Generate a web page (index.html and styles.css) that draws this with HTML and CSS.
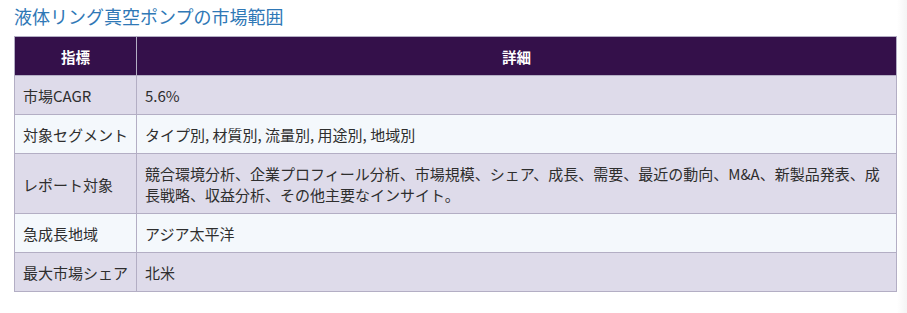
FILE: index.html
```html
<!DOCTYPE html>
<html lang="ja">
<head>
<meta charset="utf-8">
<title>液体リング真空ポンプの市場範囲</title>
<link rel="stylesheet" href="styles.css">
</head>
<body>
<div class="page">
  <h2 class="title">液体リング真空ポンプの市場範囲</h2>
  <table class="scope">
    <thead>
      <tr><th class="col-key">指標</th><th>詳細</th></tr>
    </thead>
    <tbody>
      <tr class="odd"><td>市場CAGR</td><td>5.6%</td></tr>
      <tr class="even"><td>対象セグメント</td><td>タイプ別, 材質別, 流量別, 用途別, 地域別</td></tr>
      <tr class="odd"><td>レポート対象</td><td>競合環境分析、企業プロフィール分析、市場規模、シェア、成長、需要、最近の動向、M&amp;A、新製品発表、成長戦略、収益分析、その他主要なインサイト。</td></tr>
      <tr class="even"><td>急成長地域</td><td>アジア太平洋</td></tr>
      <tr class="odd"><td>最大市場シェア</td><td>北米</td></tr>
    </tbody>
  </table>
</div>
</body>
</html>
```

FILE: styles.css
```css
html, body {
  margin: 0;
  padding: 0;
  background: #ffffff;
}
body {
  font-family: "Noto Sans CJK JP", "Noto Sans", sans-serif;
  color: #222222;
}
.page {
  padding: 4px 11px 0 14px;
  background: linear-gradient(to right, #ffffff 0, #ffffff 897px, #f4f4f4 907px);
  min-height: 313px;
  box-sizing: border-box;
}
.title {
  margin: 0 0 7px 0;
  font-size: 18px;
  font-weight: 400;
  line-height: 25px;
  color: #2f78b6;
}
.scope {
  width: 883px;
  border-collapse: collapse;
  border: 1px solid #b3aec4;
  font-size: 15px;
  line-height: 21px;
}
.scope th, .scope td {
  border: 1px solid #b3aec4;
  padding: 9px 8px 8px 8px;
  text-align: left;
  vertical-align: middle;
}
.scope th {
  background: #34104a;
  color: #ffffff;
  font-weight: 700;
  text-align: center;
  font-size: 14.5px;
}
.scope .col-key {
  width: 104px;
}
.scope td:first-child {
  white-space: nowrap;
}
.scope td {
  color: #2e2e2e;
}
.scope tr.odd td {
  background: #dedbea;
}
.scope tr.even td {
  background: #f4f8fc;
}
```
